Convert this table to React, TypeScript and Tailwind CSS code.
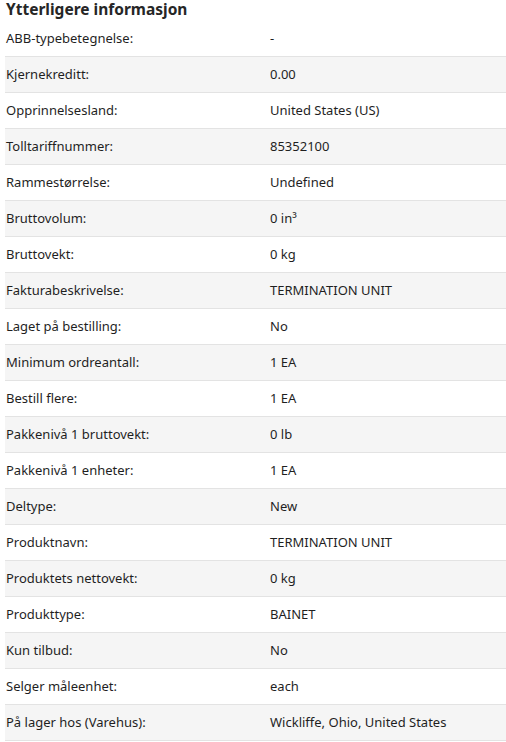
const rows: [string, string][] = [
  ['ABB-typebetegnelse:', '-'],
  ['Kjernekreditt:', '0.00'],
  ['Opprinnelsesland:', 'United States (US)'],
  ['Tolltariffnummer:', '85352100'],
  ['Rammestørrelse:', 'Undefined'],
  ['Bruttovolum:', '0 in³'],
  ['Bruttovekt:', '0 kg'],
  ['Fakturabeskrivelse:', 'TERMINATION UNIT'],
  ['Laget på bestilling:', 'No'],
  ['Minimum ordreantall:', '1 EA'],
  ['Bestill flere:', '1 EA'],
  ['Pakkenivå 1 bruttovekt:', '0 lb'],
  ['Pakkenivå 1 enheter:', '1 EA'],
  ['Deltype:', 'New'],
  ['Produktnavn:', 'TERMINATION UNIT'],
  ['Produktets nettovekt:', '0 kg'],
  ['Produkttype:', 'BAINET'],
  ['Kun tilbud:', 'No'],
  ['Selger måleenhet:', 'each'],
  ['På lager hos (Varehus):', 'Wickliffe, Ohio, United States'],
]

export default function App() {
  return (
    <div className="w-[506px] h-[742px] overflow-hidden bg-white text-[#1f1f1f]" style={{ fontFamily: '"Noto Sans", sans-serif' }}>
      <h2 className="pl-[6px] h-[21px] text-[15.5px] leading-[19px] font-bold text-[#262626]">Ytterligere informasjon</h2>
      <div className="pl-[5px]">
        {rows.map(([label, value], i) => (
          <div
            key={label}
            className={`grid grid-cols-[265px_1fr] items-center h-[36px] border-b border-[#e3e3e3] text-[13px] ${i % 2 === 1 ? 'bg-[#f5f5f5]' : 'bg-white'}`}
          >
            <span className="pl-[1px]">{label}</span>
            <span>{value}</span>
          </div>
        ))}
      </div>
    </div>
  )
}
